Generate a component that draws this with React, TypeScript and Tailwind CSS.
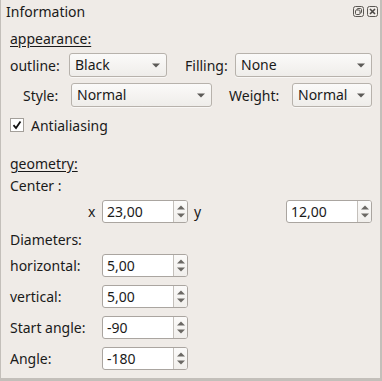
import React from 'react';

const FONT = { fontFamily: '"Noto Sans", "Open Sans", sans-serif' };

const Arrow = () => (
  <svg width="8" height="5" viewBox="0 0 8 5" className="shrink-0">
    <path d="M0 0.5 L8 0.5 L4 4.5 Z" fill="#5c5a57" />
  </svg>
);

interface ComboProps {
  value: string;
  width: string;
}

const Combo = ({ value, width }: ComboProps) => (
  <div
    className={`${width} h-[24px] flex items-center justify-between pl-[5px] pr-[6px] rounded-[3px] border border-[#b7b2ac] bg-gradient-to-b from-[#fbfaf9] to-[#efedea] shadow-[0_1px_0_rgba(255,255,255,0.6)]`}
  >
    <span className="leading-none">{value}</span>
    <Arrow />
  </div>
);

const SpinBox = ({ value }: { value: string }) => (
  <div className="w-[86px] h-[23px] flex rounded-[3px] border border-[#aaa5a0] bg-white overflow-hidden">
    <div className="flex-1 flex items-center pl-[4px] leading-none">{value}</div>
    <div className="w-[14px] flex flex-col items-center justify-center gap-[3px] border-l border-[#c4c0bb] bg-gradient-to-b from-[#fbfaf9] to-[#f1efec]">
      <svg width="8" height="5" viewBox="0 0 8 5">
        <path d="M0 4.5 L8 4.5 L4 0.5 Z" fill="#6b6864" />
      </svg>
      <svg width="8" height="5" viewBox="0 0 8 5">
        <path d="M0 0.5 L8 0.5 L4 4.5 Z" fill="#6b6864" />
      </svg>
    </div>
  </div>
);

const TitleButton = ({ kind }: { kind: 'float' | 'close' }) => (
  <svg width="11" height="11" viewBox="0 0 11 11">
    <rect x="0.5" y="0.5" width="10" height="10" rx="2" fill="none" stroke="#5a5753" />
    {kind === 'float' ? (
      <>
        <rect x="4" y="2.5" width="4.5" height="4.5" rx="1" fill="none" stroke="#5a5753" />
        <rect x="2.5" y="4" width="4.5" height="4.5" rx="1" fill="#efebe7" stroke="#5a5753" />
      </>
    ) : (
      <path d="M3 3 L8 8 M8 3 L3 8" stroke="#4a4744" strokeWidth="1.6" />
    )}
  </svg>
);

const DimRow = ({ label, value }: { label: string; value: string }) => (
  <div className="flex items-center">
    <span className="w-[92px]">{label}</span>
    <SpinBox value={value} />
  </div>
);

export default function App() {
  return (
    <div
      style={FONT}
      className="w-[382px] h-[381px] bg-[#efebe7] border-l border-r-2 border-b-[3px] border-[#c3bfba] text-[14px] text-[#1a1a1a] overflow-hidden"
    >
      {/* Title bar */}
      <div className="h-[22px] flex items-center justify-between pl-[5px] pr-[2px]">
        <span>Information</span>
        <div className="flex gap-[3px]">
          <TitleButton kind="float" />
          <TitleButton kind="close" />
        </div>
      </div>

      <div className="pl-[9px] flex flex-col">
        <div className="h-[20px] mt-[6px] flex items-center">
          <span className="underline underline-offset-[2px]">appearance:</span>
        </div>

        {/* outline / filling */}
        <div className="mt-[5px] flex items-center">
          <span className="w-[59px]">outline:</span>
          <Combo value="Black" width="w-[98px]" />
          <span className="ml-[18px] w-[50px]">Filling:</span>
          <Combo value="None" width="w-[137px]" />
        </div>

        {/* style / weight */}
        <div className="mt-[6px] flex items-center">
          <span className="ml-[13px] w-[48px]">Style:</span>
          <Combo value="Normal" width="w-[141px]" />
          <span className="ml-[17px] w-[63px]">Weight:</span>
          <Combo value="Normal" width="w-[80px]" />
        </div>

        {/* antialiasing */}
        <div className="mt-[8px] h-[20px] flex items-center">
          <div className="w-[14px] h-[14px] border border-[#a39f9a] bg-white flex items-center justify-center">
            <svg width="10" height="10" viewBox="0 0 10 10">
              <path d="M1.5 5.2 L4 8 L8.5 1.5" fill="none" stroke="#111" strokeWidth="1.8" />
            </svg>
          </div>
          <span className="ml-[7px]">Antialiasing</span>
        </div>

        <div className="h-[20px] mt-[18px] flex items-center">
          <span className="underline underline-offset-[2px]">geometry:</span>
        </div>
        <div className="h-[20px] mt-[2px] flex items-center">Center :</div>

        {/* x / y */}
        <div className="mt-[5px] flex items-center pl-[78px]">
          <span className="w-[14px]">x</span>
          <SpinBox value="23,00" />
          <span className="ml-[6px] w-[92px]">y</span>
          <SpinBox value="12,00" />
        </div>

        <div className="h-[20px] mt-[6px] flex items-center">Diameters:</div>

        <div className="mt-[5px] flex flex-col gap-[8px]">
          <DimRow label="horizontal:" value="5,00" />
          <DimRow label="vertical:" value="5,00" />
          <DimRow label="Start angle:" value="-90" />
          <DimRow label="Angle:" value="-180" />
        </div>
      </div>
    </div>
  );
}
